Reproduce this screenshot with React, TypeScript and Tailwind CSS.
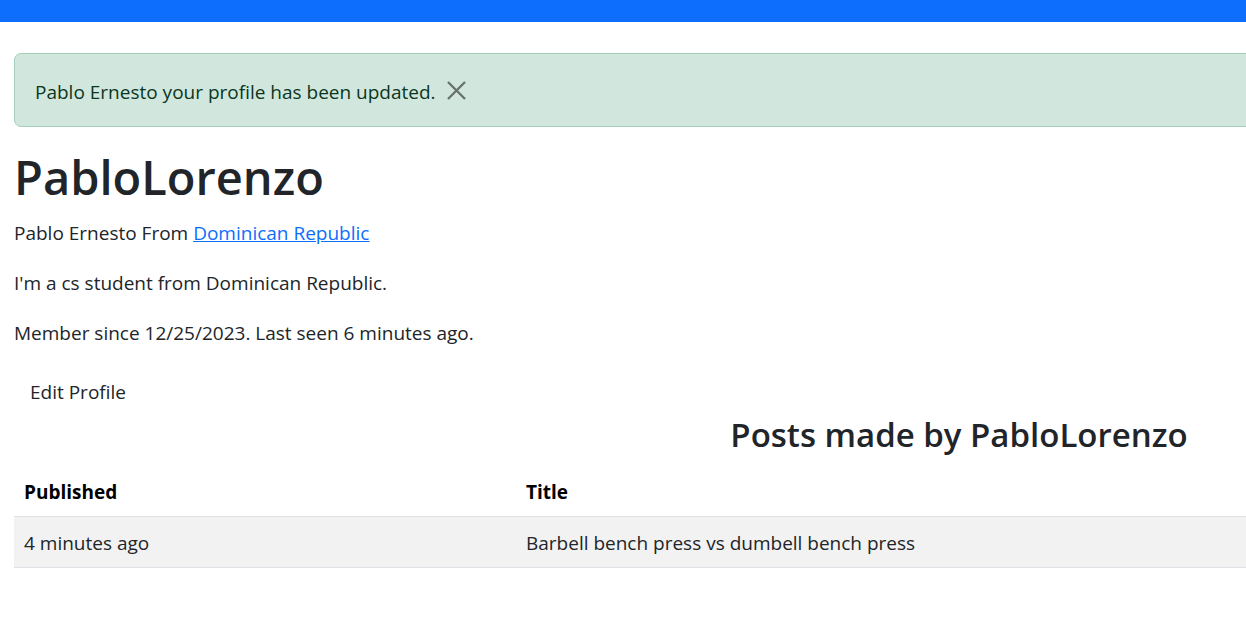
export default function App() {
  return (
    <div className="w-screen min-h-screen overflow-hidden bg-white text-[19px] leading-[30px] text-[#212529] font-['Open_Sans',sans-serif]">
      <div className="h-[22px] bg-[#0d6efd]" />

      <div className="w-[1904px] pl-[14px] pt-[31px]">
        <div className="mb-[20px] flex items-center rounded-[7px] border border-[#a3cfbb] bg-[#d1e7dd] px-[20px] pt-[23px] pb-[19px] text-[#0a3622]">
          <span>Pablo Ernesto your profile has been updated.</span>
          <button className="ml-[6px] -mt-[4px] flex h-[30px] w-[30px] items-center justify-center opacity-50">
            <svg width="21" height="21" viewBox="0 0 16 16" fill="none" stroke="#000" strokeWidth="1.8">
              <path d="M1.5 1.5l13 13M14.5 1.5l-13 13" />
            </svg>
          </button>
        </div>

        <h1 className="mb-[10px] text-[47px] leading-[60px] font-semibold">PabloLorenzo</h1>
        <p className="mb-[19px] pt-[1px]">
          Pablo Ernesto From{' '}
          <a href="#" className="text-[#0d6efd] underline">Dominican Republic</a>
        </p>
        <p className="mb-[19px] pt-[1px]">I'm a cs student from Dominican Republic.</p>
        <p className="mb-[19px] pt-[1px]">Member since 12/25/2023. Last seen 6 minutes ago.</p>

        <button className="block border border-transparent px-[15px] pt-[9px] pb-[6px] text-[#212529]">Edit Profile</button>

        <h3 className="mb-[11px] text-center text-[33px] leading-[42px] font-semibold">Posts made by PabloLorenzo</h3>

        <table className="w-full border-collapse text-left">
          <thead>
            <tr className="border-b border-[#dee2e6] text-black">
              <th className="w-[502px] px-[10px] pt-[10px] pb-[9px] font-bold">Published</th>
              <th className="px-[10px] pt-[10px] pb-[9px] font-bold">Title</th>
            </tr>
          </thead>
          <tbody>
            <tr className="border-b border-[#dee2e6] bg-[#f2f2f2]">
              <td className="px-[10px] pt-[11px] pb-[9px]">4 minutes ago</td>
              <td className="px-[10px] pt-[11px] pb-[9px]">Barbell bench press vs dumbell bench press</td>
            </tr>
          </tbody>
        </table>
      </div>
    </div>
  );
}
